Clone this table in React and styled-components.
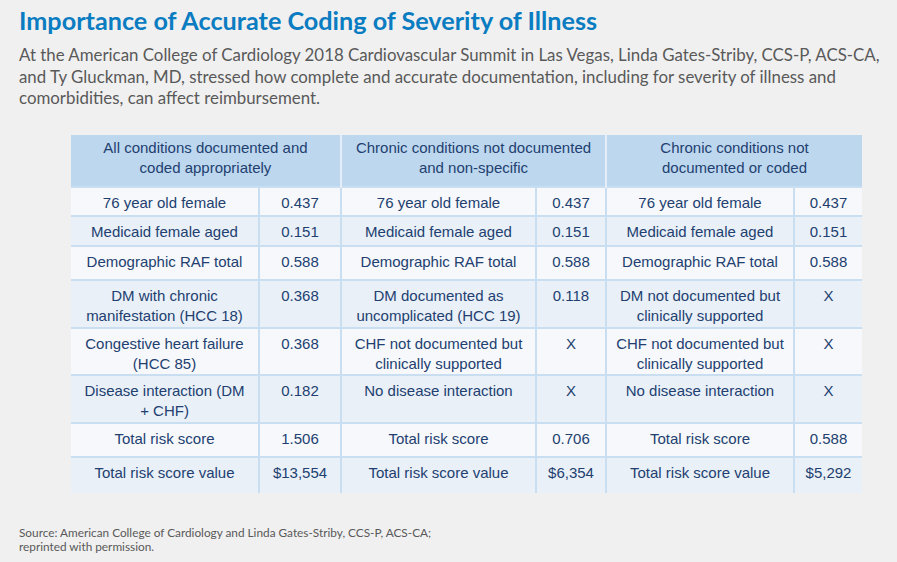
import React from 'react';
import styled, { createGlobalStyle } from 'styled-components';

const GlobalStyle = createGlobalStyle`
  html, body {
    margin: 0;
    padding: 0;
    background: #f0f0f0;
  }
`;

const Page = styled.div`
  width: 897px;
  height: 562px;
  box-sizing: border-box;
  padding: 4px 0 0 19px;
  display: flex;
  flex-direction: column;
  background: #f0f0f0;
  overflow: hidden;
`;

const Title = styled.h1`
  margin: 0;
  font-family: Lato, "Open Sans", sans-serif;
  font-weight: 700;
  font-size: 25.2px;
  line-height: 32px;
  color: #0a7cc1;
`;

const Intro = styled.p`
  margin: 8px 0 0;
  font-family: Lato, "Open Sans", sans-serif;
  font-size: 16.85px;
  line-height: 21.5px;
  color: #595959;
  white-space: nowrap;
`;

const Table = styled.table`
  margin: 26px 0 0 52px;
  width: 791px;
  border-collapse: collapse;
  table-layout: fixed;
  font-family: "Liberation Sans", Arial, sans-serif;
  font-size: 15px;
  line-height: 20px;
  color: #223f70;
  white-space: pre-line;
`;

const HeadCell = styled.th`
  background: #bdd7ee;
  font-weight: 400;
  height: 52px;
  padding: 3px 6px 0;
  vertical-align: top;
  border-left: 2px solid #e4eef8;
  box-sizing: border-box;
  &:first-child { border-left: none; }
`;

const Row = styled.tr`
  background: ${p => (p.$alt ? '#e9f0f8' : '#f6f8fb')};
  height: ${p => p.$h}px;
  border-top: 2px solid #cadef1;
`;

const Cell = styled.td`
  padding: 5px 4px 0;
  vertical-align: top;
  text-align: center;
  border-left: 2px solid #cadef1;
  &:first-child { border-left: none; }
`;

const Source = styled.p`
  margin: auto 0 8px;
  font-family: Lato, "Open Sans", sans-serif;
  font-size: 11.8px;
  line-height: 14px;
  color: #595959;
`;

const cols = [188, 82, 195, 70, 188, 68];

const headers = [
  'All conditions documented and\ncoded appropriately',
  'Chronic conditions not documented\nand non-specific',
  'Chronic conditions not\ndocumented or coded',
];

const rows = [
  { h: 29, cells: ['76 year old female', '0.437', '76 year old female', '0.437', '76 year old female', '0.437'] },
  { h: 30, cells: ['Medicaid female aged', '0.151', 'Medicaid female aged', '0.151', 'Medicaid female aged', '0.151'] },
  { h: 34, cells: ['Demographic RAF total', '0.588', 'Demographic RAF total', '0.588', 'Demographic RAF total', '0.588'] },
  { h: 48, cells: ['DM with chronic\nmanifestation (HCC 18)', '0.368', 'DM documented as\nuncomplicated (HCC 19)', '0.118', 'DM not documented but\nclinically supported', 'X'] },
  { h: 47, cells: ['Congestive heart failure\n(HCC 85)', '0.368', 'CHF not documented but\nclinically supported', 'X', 'CHF not documented but\nclinically supported', 'X'] },
  { h: 48, cells: ['Disease interaction (DM\n+ CHF)', '0.182', 'No disease interaction', 'X', 'No disease interaction', 'X'] },
  { h: 34, cells: ['Total risk score', '1.506', 'Total risk score', '0.706', 'Total risk score', '0.588'] },
  { h: 36, cells: ['Total risk score value', '$13,554', 'Total risk score value', '$6,354', 'Total risk score value', '$5,292'] },
];

export default function App() {
  return (
    <>
      <GlobalStyle />
      <Page>
        <Title>Importance of Accurate Coding of Severity of Illness</Title>
        <Intro>
          At the American College of Cardiology 2018 Cardiovascular Summit in Las Vegas, Linda Gates-Striby, CCS-P, ACS-CA,<br />
          and Ty Gluckman, MD, stressed how complete and accurate documentation, including for severity of illness and<br />
          comorbidities, can affect reimbursement.
        </Intro>
        <Table>
          <colgroup>
            {cols.map((w, i) => <col key={i} style={{ width: w }} />)}
          </colgroup>
          <thead>
            <tr>
              {headers.map(h => <HeadCell key={h} colSpan={2}>{h}</HeadCell>)}
            </tr>
          </thead>
          <tbody>
            {rows.map((r, i) => (
              <Row key={i} $alt={i % 2 === 1} $h={r.h}>
                {r.cells.map((c, j) => <Cell key={j}>{c}</Cell>)}
              </Row>
            ))}
          </tbody>
        </Table>
        <Source>
          Source: American College of Cardiology and Linda Gates-Striby, CCS-P, ACS-CA;<br />
          reprinted with permission.
        </Source>
      </Page>
    </>
  );
}
